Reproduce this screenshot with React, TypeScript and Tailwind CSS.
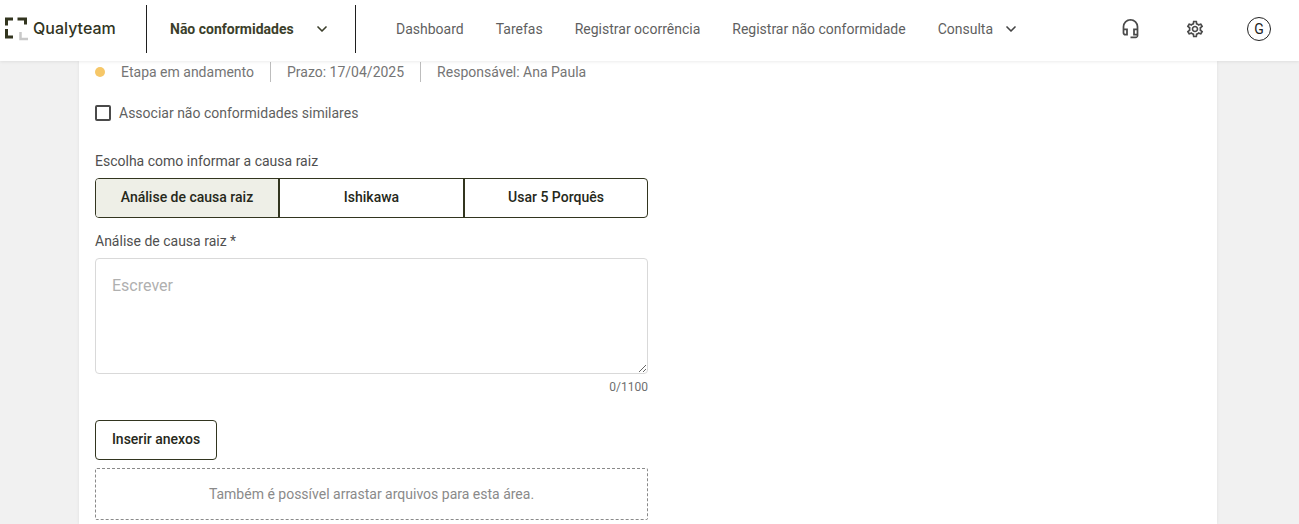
import { ChevronDown } from "lucide-react";
import { MdOutlineHeadsetMic, MdOutlineSettings } from "react-icons/md";

const navItems = ["Dashboard", "Tarefas", "Registrar ocorrência", "Registrar não conformidade"];

const Logo = () => (
  <svg width="24" height="26" viewBox="0 0 24 26" fill="none" strokeWidth="3">
    <path d="M9 3H2.5V9.5" stroke="#32351f" />
    <path d="M13.5 3H21.5V8.5" stroke="#32351f" />
    <path d="M2.5 13V21H9" stroke="#32351f" />
    <path d="M16.5 16V23H24" stroke="#c9c9c9" strokeWidth="2.5" />
  </svg>
);

const Header = () => (
  <header className="relative z-10 flex h-[61px] shrink-0 items-center bg-white pb-1 shadow-[0_1px_3px_rgba(0,0,0,0.08)]">
    <div className="flex w-[146px] items-center gap-[5px] pl-[4px]">
      <Logo />
      <span className="pb-[2px] font-['Inter',sans-serif] text-base font-[450] text-[#32351f]">Qualyteam</span>
    </div>
    <div className="flex h-[48px] w-[210px] items-center border-x border-[#1f1f1f] pl-[23px]">
      <span className="text-sm font-bold text-[#3c3f2b]">Não conformidades</span>
      <ChevronDown size={16} strokeWidth={2.5} className="ml-[20px] text-[#3c3f2b]" />
    </div>
    <nav className="flex items-center gap-8 pl-[40px] text-sm text-[#5f5f5f]">
      {navItems.map((item) => (
        <span key={item}>{item}</span>
      ))}
      <span className="flex items-center gap-[10px]">
        Consulta <ChevronDown size={16} strokeWidth={2.5} className="text-[#444]" />
      </span>
    </nav>
    <div className="ml-auto flex items-center pr-[28px] text-[#4a4a4a]">
      <MdOutlineHeadsetMic size={21} />
      <MdOutlineSettings size={20} className="ml-[44px]" />
      <span className="ml-[42px] flex size-6 items-center justify-center rounded-full border border-[#222] text-sm text-[#222]">
        G
      </span>
    </div>
  </header>
);

const App = () => {
  return (
    <div className="flex h-[524px] flex-col overflow-hidden bg-[#f1f1f1] font-['Roboto',sans-serif]">
      <Header />
      <main className="ml-[79px] h-[463px] w-[1138px] bg-white px-4 shadow-[0_0_3px_rgba(0,0,0,0.08)]">
        <div className="flex h-[21px] items-center text-sm text-[#757575]">
          <span className="size-[10px] rounded-full bg-[#f6c768]" />
          <span className="ml-[16px] border-r border-[#bdbdbd] pr-4">Etapa em andamento</span>
          <span className="border-r border-[#bdbdbd] px-4">Prazo: 17/04/2025</span>
          <span className="pl-4">Responsável: Ana Paula</span>
        </div>

        <label className="mt-[21px] flex items-center gap-2 text-sm text-[#5f5f5f]">
          <span className="size-4 rounded-[2px] border-2 border-[#4a4a4a]" />
          Associar não conformidades similares
        </label>

        <div className="w-[553px]">
          <p className="mt-[28px] text-sm leading-5 text-[#4f4f4f]">Escolha como informar a causa raiz</p>
          <div className="mt-[7px] grid h-10 grid-cols-[184px_185px_1fr] rounded border border-[#32351f] text-sm font-medium text-[#26281a]">
            <span className="flex items-center justify-center rounded-l-[3px] border-r-2 border-[#32351f] bg-[#eeefe7] pb-[2px]">
              Análise de causa raiz
            </span>
            <span className="flex items-center justify-center border-r-2 border-[#32351f] pb-[2px]">Ishikawa</span>
            <span className="flex items-center justify-center pb-[2px]">Usar 5 Porquês</span>
          </div>

          <p className="mt-[13px] text-sm leading-5 text-[#4f4f4f]">Análise de causa raiz *</p>
          <textarea
            placeholder="Escrever"
            className="mt-[7px] block h-[116px] w-full rounded border border-[#d9d9d9] px-4 py-[15px] text-base outline-none placeholder:text-[#b0b0b0]"
          />
          <p className="mt-[6px] text-right text-xs leading-[14px] text-[#6f6f6f]">0/1100</p>

          <button className="mt-[26px] block h-10 w-[122px] rounded border border-[#32351f] pb-[2px] text-sm font-medium text-[#26281a]">
            Inserir anexos
          </button>
          <div className="mt-2 flex h-[52px] items-center justify-center rounded-[2px] border border-dashed border-[#8a8a8a] text-sm text-[#8a8a8a]">
            Também é possível arrastar arquivos para esta área.
          </div>
        </div>
      </main>
    </div>
  );
};

export default App;
